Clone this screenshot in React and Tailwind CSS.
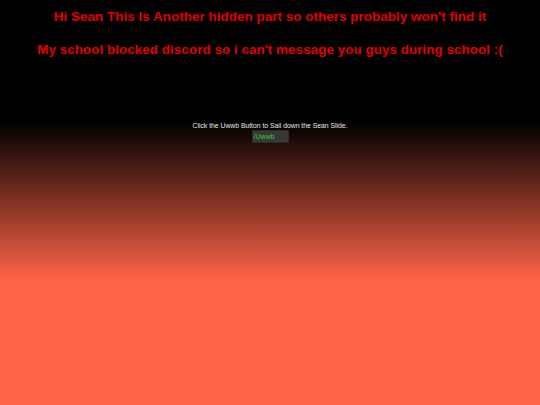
export default function App() {
  return (
    <div className="min-h-[405px] w-full bg-[linear-gradient(to_bottom,#000_122px,#ff6347_280px)] font-['Liberation_Sans',Arial,sans-serif] text-center">
      <div className="pt-[8px]">
        <p className="text-[13.5px] leading-[17px] font-bold text-[#e00000]">
          Hi Sean This Is Another hidden part so others probably won't find it
        </p>
        <p className="mt-[16px] text-[13.5px] leading-[17px] font-bold text-[#e00000]">
          My school blocked discord so i can't message you guys during school :(
        </p>
      </div>
      <div className="mt-[64px] flex flex-col items-center">
        <p className="text-[6.8px] leading-[8px] text-[#e6e6e6]">
          Click the Uwwb Button to Sail down the Sean Slide.
        </p>
        <button className="mt-0 w-[37px] h-[13px] bg-[#383838] border border-[#2a2a2a] text-left pl-[1px] text-[7px] leading-[11px] text-[#2ad02a]">
          /Uwwb
        </button>
      </div>
    </div>
  )
}
